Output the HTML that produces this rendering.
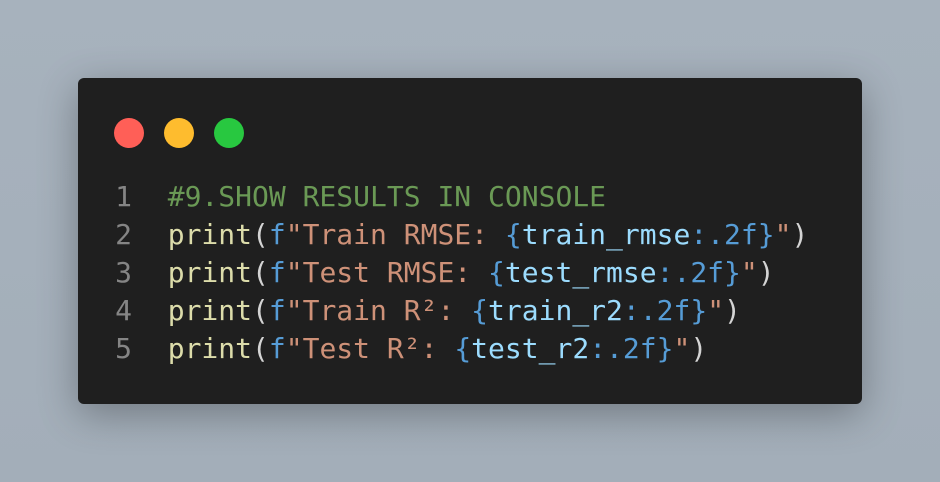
<!DOCTYPE html>
<html><head><meta charset="utf-8"><style>
html,body{margin:0;width:940px;height:482px;overflow:hidden}
body{background:linear-gradient(180deg,#a7b2bd,#a3aeb9);position:relative}
.card{position:absolute;left:78px;top:78px;width:784px;height:326px;background:#1f1f1f;border-radius:6px;box-shadow:0 10px 40px rgba(0,0,0,.3)}
.dot{position:absolute;top:40px;width:30px;height:30px;border-radius:50%}
pre{position:absolute;left:0;top:100px;margin:0;font-family:"DejaVu Sans Mono","Liberation Mono",monospace;font-size:28px;line-height:38px;color:#d4d4d4}
.ln{color:#858585;display:inline-block;width:54px;text-align:right;margin-right:2px}
.c{color:#6a9955}.f{color:#dcdcaa}.s{color:#ce9178}.k{color:#569cd6}.v{color:#9cdcfe}
</style></head><body>
<div class="card">
<div class="dot" style="left:36px;background:#ff5f57"></div>
<div class="dot" style="left:86px;background:#febc2e"></div>
<div class="dot" style="left:136px;background:#28c840"></div>
<pre><span class="ln">1</span>  <span class="c">#9.SHOW RESULTS IN CONSOLE</span>
<span class="ln">2</span>  <span class="f">print</span>(<span class="k">f</span><span class="s">"Train RMSE: </span><span class="k">{</span><span class="v">train_rmse</span><span class="k">:.2f}</span><span class="s">"</span>)
<span class="ln">3</span>  <span class="f">print</span>(<span class="k">f</span><span class="s">"Test RMSE: </span><span class="k">{</span><span class="v">test_rmse</span><span class="k">:.2f}</span><span class="s">"</span>)
<span class="ln">4</span>  <span class="f">print</span>(<span class="k">f</span><span class="s">"Train R²: </span><span class="k">{</span><span class="v">train_r2</span><span class="k">:.2f}</span><span class="s">"</span>)
<span class="ln">5</span>  <span class="f">print</span>(<span class="k">f</span><span class="s">"Test R²: </span><span class="k">{</span><span class="v">test_r2</span><span class="k">:.2f}</span><span class="s">"</span>)</pre>
</div>
</body></html>
